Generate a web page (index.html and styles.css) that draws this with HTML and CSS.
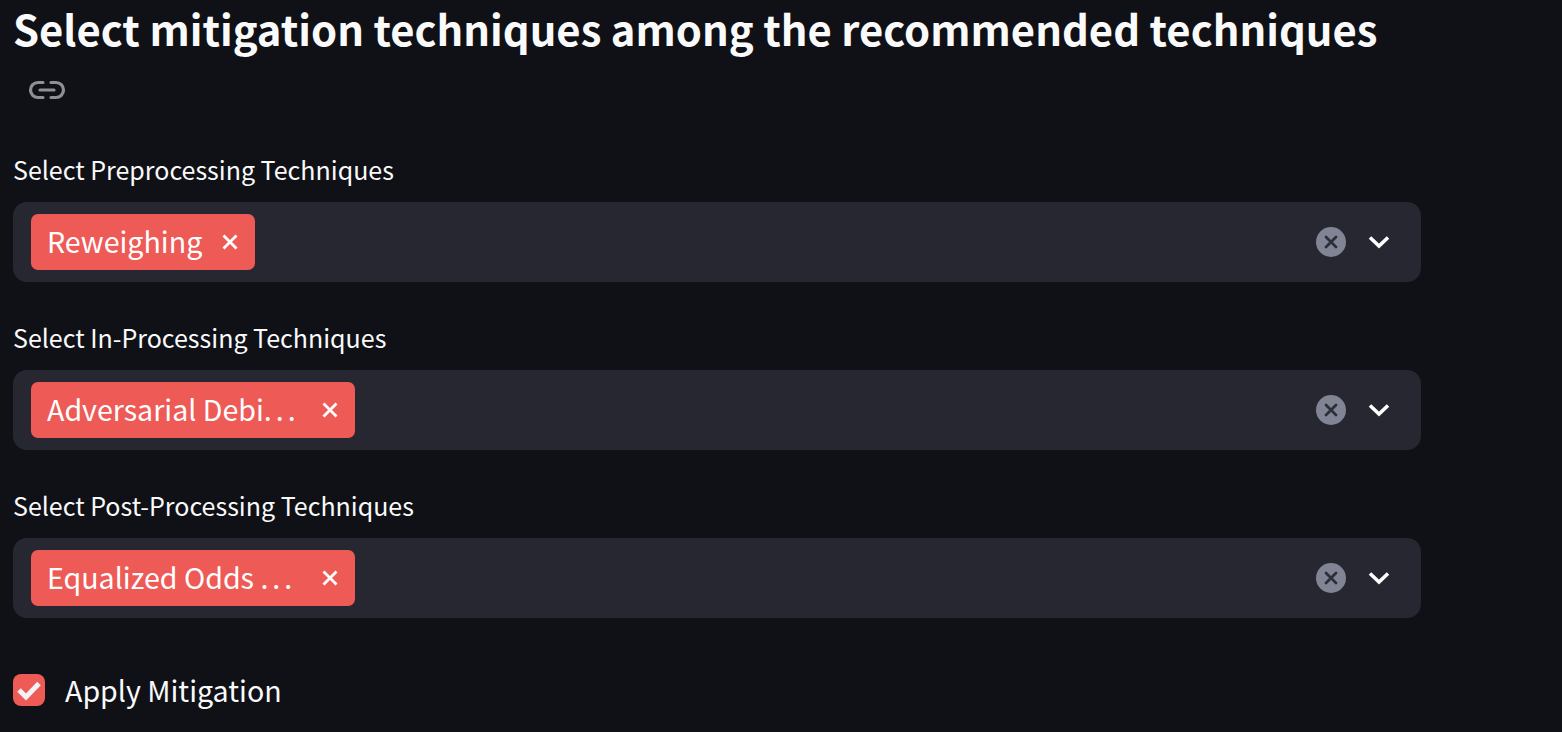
FILE: index.html
```html
<!DOCTYPE html>
<html>

<head>
    <meta charset='utf-8'>
    <title>Mitigation</title>
    <link rel="stylesheet" href="styles.css">
</head>

<body>
    <div class="main">
        <h2 class="title">Select mitigation techniques among the recommended techniques</h2>
        <div class="anchor">
            <svg width="38" height="20" viewBox="0 0 38 20" fill="none" stroke="#8f9094" stroke-width="3.2" stroke-linecap="round">
                <path d="M15 2.5H10a7.5 7.5 0 0 0 0 15h5"/>
                <path d="M23 2.5h5a7.5 7.5 0 0 1 0 15h-5"/>
                <path d="M12 10h14"/>
            </svg>
        </div>

        <div class="field">
            <label class="field-label">Select Preprocessing Techniques</label>
            <div class="select">
                <span class="tag"><span class="tag-text">Reweighing</span><svg class="tag-x" width="16" height="16" viewBox="0 0 16 16" stroke="#fff" stroke-width="2.8"><path d="M1.5 1.5l13 13M14.5 1.5l-13 13"/></svg></span>
                <span class="clear"><svg width="14" height="14" viewBox="0 0 14 14" stroke="#2d2e37" stroke-width="2.8" stroke-linecap="round"><path d="M2 2l10 10M12 2L2 12"/></svg></span>
                <svg class="chevron" width="24" height="16" viewBox="0 0 24 16" fill="none" stroke="#fff" stroke-width="3.6"><path d="M3 3.5l9 8.5 9-8.5"/></svg>
            </div>
        </div>

        <div class="field">
            <label class="field-label">Select In-Processing Techniques</label>
            <div class="select">
                <span class="tag tag-cut"><span class="tag-text">Adversarial Debi<span class="dots">...</span></span><svg class="tag-x" width="16" height="16" viewBox="0 0 16 16" stroke="#fff" stroke-width="2.8"><path d="M1.5 1.5l13 13M14.5 1.5l-13 13"/></svg></span>
                <span class="clear"><svg width="14" height="14" viewBox="0 0 14 14" stroke="#2d2e37" stroke-width="2.8" stroke-linecap="round"><path d="M2 2l10 10M12 2L2 12"/></svg></span>
                <svg class="chevron" width="24" height="16" viewBox="0 0 24 16" fill="none" stroke="#fff" stroke-width="3.6"><path d="M3 3.5l9 8.5 9-8.5"/></svg>
            </div>
        </div>

        <div class="field">
            <label class="field-label">Select Post-Processing Techniques</label>
            <div class="select">
                <span class="tag tag-cut"><span class="tag-text">Equalized Odds <span class="dots">...</span></span><svg class="tag-x" width="16" height="16" viewBox="0 0 16 16" stroke="#fff" stroke-width="2.8"><path d="M1.5 1.5l13 13M14.5 1.5l-13 13"/></svg></span>
                <span class="clear"><svg width="14" height="14" viewBox="0 0 14 14" stroke="#2d2e37" stroke-width="2.8" stroke-linecap="round"><path d="M2 2l10 10M12 2L2 12"/></svg></span>
                <svg class="chevron" width="24" height="16" viewBox="0 0 24 16" fill="none" stroke="#fff" stroke-width="3.6"><path d="M3 3.5l9 8.5 9-8.5"/></svg>
            </div>
        </div>

        <div class="check">
            <span class="check-box"><svg width="26" height="22" viewBox="0 0 26 22" fill="none" stroke="#f3f3f5" stroke-width="5"><path d="M3 11l7 7L23 4.5"/></svg></span>
            <span class="check-label">Apply Mitigation</span>
        </div>
    </div>
</body>
</html>
```

FILE: styles.css
```css
html, body {
    margin: 0;
    height: 100%;
    background: #0f1117;
}

body {
    color: #fafafa;
    font-family: "Noto Sans CJK SC", "Noto Sans", sans-serif;
    overflow: hidden;
}

.main {
    padding: 0 141px 0 13px;
    display: flex;
    flex-direction: column;
}

.title {
    margin: 0;
    font-size: 41.8px;
    font-weight: 700;
    line-height: 56px;
    white-space: nowrap;
}

.anchor {
    height: 94px;
    box-sizing: border-box;
    padding: 24px 0 0 15px;
}

.field {
    display: flex;
    flex-direction: column;
    height: 168px;
}

.field-label {
    font-size: 25px;
    line-height: 38px;
    height: 52px;
    flex: none;
}

.select {
    height: 80px;
    flex: none;
    box-sizing: border-box;
    background: #262730;
    border-radius: 14px;
    padding: 0 30px 0 18px;
    display: flex;
    align-items: center;
}

.tag {
    height: 56px;
    box-sizing: border-box;
    background: #ee5a56;
    border-radius: 7px;
    padding: 0 17px 0 16px;
    display: flex;
    align-items: center;
    color: #fff;
    font-size: 28.6px;
}

.tag-cut {
    width: 324px;
}

.tag-text {
    white-space: nowrap;
    padding-bottom: 4px;
}

.dots {
    letter-spacing: 4px;
}

.tag-x {
    margin-left: 20px;
}

.tag-cut .tag-x {
    margin-left: auto;
}

.clear {
    margin-left: auto;
    width: 30px;
    height: 30px;
    border-radius: 50%;
    background: #808495;
    display: flex;
    align-items: center;
    justify-content: center;
}

.chevron {
    margin-left: 21px;
}

.check {
    display: flex;
    align-items: center;
    gap: 20px;
    margin-top: 14px;
}

.check-box {
    width: 32px;
    height: 32px;
    border-radius: 8px;
    background: #ee5a56;
    display: flex;
    align-items: center;
    justify-content: center;
}

.check-label {
    font-size: 28.6px;
    line-height: 44px;
}
```
